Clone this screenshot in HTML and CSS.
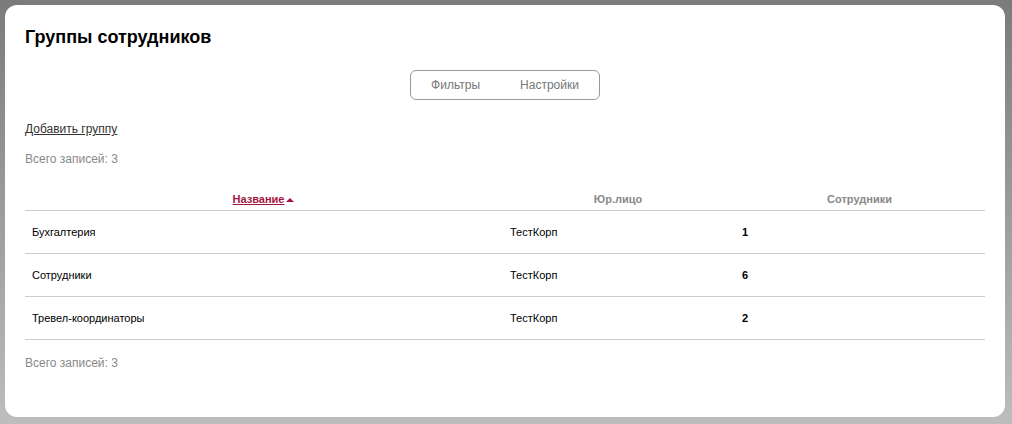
FILE: index.html
```html
<!DOCTYPE html>
<html lang="ru">
<head>
    <meta charset="UTF-8">
    <meta name="viewport" content="width=device-width, initial-scale=1.0">
    <title>Группы сотрудников</title>
    <link rel="stylesheet" href="styles.css">
</head>
<body>
    <div class="card">
        <h1 class="title">Группы сотрудников</h1>

        <!-- tabs -->
        <div class="tabs-wrap">
            <div class="tabs">
                <a href="#" class="tab">Фильтры</a>
                <a href="#" class="tab">Настройки</a>
            </div>
        </div>

        <a href="#" class="add-link">Добавить группу</a>
        <p class="total">Всего записей: 3</p>

        <table class="groups">
            <thead>
                <tr>
                    <th class="col-name"><a href="#" class="sort">Название</a><span class="arrow"></span></th>
                    <th class="col-org">Юр.лицо</th>
                    <th class="col-count">Сотрудники</th>
                </tr>
            </thead>
            <tbody>
                <tr>
                    <td class="name">Бухгалтерия</td>
                    <td>ТестКорп</td>
                    <td class="num">1</td>
                </tr>
                <tr>
                    <td class="name">Сотрудники</td>
                    <td>ТестКорп</td>
                    <td class="num">6</td>
                </tr>
                <tr>
                    <td class="name">Тревел-координаторы</td>
                    <td>ТестКорп</td>
                    <td class="num">2</td>
                </tr>
            </tbody>
        </table>

        <p class="total total-bottom">Всего записей: 3</p>
    </div>
</body>
</html>
```

FILE: styles.css
```css
body {
    margin: 0;
    padding: 5px 7px 7px 5px;
    font-family: "Liberation Sans", Arial, sans-serif;
    background: linear-gradient(#7b7b7b, #bdbdbd);
    color: #111;
    height: 424px;
    box-sizing: border-box;
    overflow: hidden;
}

.card {
    background: #fff;
    border-radius: 12px;
    height: 412px;
    box-sizing: border-box;
    padding: 21px 20px 0 20px;
}

.title {
    margin: 0;
    font-size: 18px;
    line-height: 22px;
    font-weight: bold;
    color: #000;
}

.tabs-wrap {
    display: flex;
    justify-content: center;
    margin-top: 22px;
}

.tabs {
    display: flex;
    gap: 40px;
    border: 1px solid #999;
    border-radius: 6px;
    height: 28px;
    align-items: center;
    padding: 0 20px;
}

.tab {
    font-size: 12px;
    color: #777;
    text-decoration: none;
}

.add-link {
    display: block;
    width: fit-content;
    margin-top: 21px;
    font-size: 12px;
    line-height: 16px;
    color: #333;
    text-decoration: underline;
}

.total {
    margin: 14px 0 0 0;
    font-size: 12px;
    line-height: 16px;
    color: #888;
}

.groups {
    width: 100%;
    margin-top: 17px;
    border-collapse: separate;
    border-spacing: 0;
    font-size: 11px;
}

.groups th {
    padding: 8px 8px 4px 8px;
    line-height: 14px;
    font-weight: bold;
    color: #888;
    text-align: center;
    border-bottom: 1px solid #ccc;
}

.groups .col-name {
    width: 461px;
}

.groups .col-org {
    width: 216px;
}

.sort {
    color: #a3173f;
    text-decoration: underline;
}

.arrow {
    display: inline-block;
    width: 0;
    height: 0;
    margin-left: 2px;
    border-left: 4px solid transparent;
    border-right: 4px solid transparent;
    border-bottom: 4px solid #a3173f;
    vertical-align: 1px;
}

.groups td {
    height: 43px;
    padding: 0 8px;
    box-sizing: border-box;
    line-height: 14px;
    border-bottom: 1px solid #ccc;
    color: #000;
}

.groups td.name {
    padding-left: 7px;
}

.groups td.num {
    font-weight: bold;
}

.total-bottom {
    margin-top: 15px;
}
```
